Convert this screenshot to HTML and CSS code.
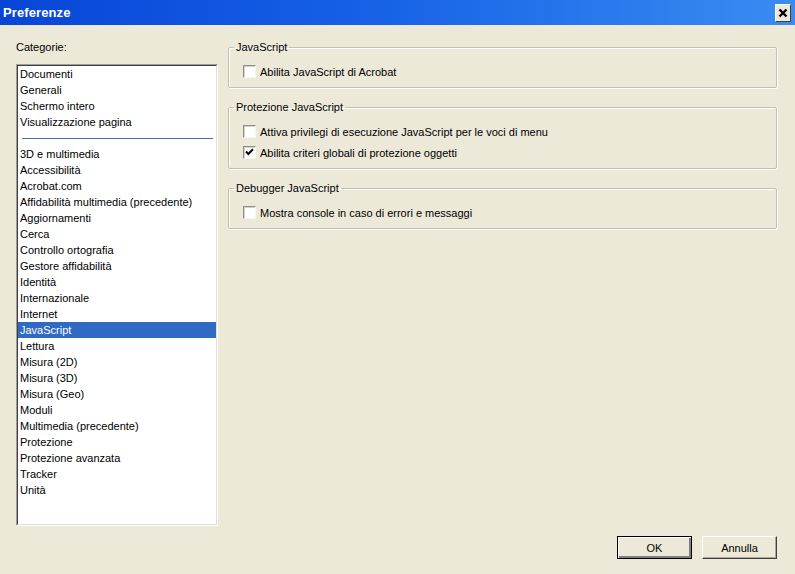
FILE: index.html
```html
<!DOCTYPE html>
<html lang="it">
<head>
<meta charset="utf-8">
<title>Preferenze</title>
<link rel="stylesheet" href="styles.css">
</head>
<body>
<div class="window">
  <div class="titlebar">
    <span class="title">Preferenze</span>
    <span class="close"><svg width="10" height="10" viewBox="0 0 10 10"><path d="M1.5 1.5 L8.5 8.5 M8.5 1.5 L1.5 8.5" stroke="#000" stroke-width="2.4" fill="none"/></svg></span>
  </div>
  <div class="main">
    <div class="left">
      <div class="label">Categorie:</div>
      <div class="listbox">
        <div class="listbox-inner">
          <div class="item">Documenti</div>
          <div class="item">Generali</div>
          <div class="item">Schermo intero</div>
          <div class="item">Visualizzazione pagina</div>
          <div class="sep"><span class="sep-line"></span></div>
          <div class="item">3D e multimedia</div>
          <div class="item">Accessibilità</div>
          <div class="item">Acrobat.com</div>
          <div class="item">Affidabilità multimedia (precedente)</div>
          <div class="item">Aggiornamenti</div>
          <div class="item">Cerca</div>
          <div class="item">Controllo ortografia</div>
          <div class="item">Gestore affidabilità</div>
          <div class="item">Identità</div>
          <div class="item">Internazionale</div>
          <div class="item">Internet</div>
          <div class="item selected">JavaScript</div>
          <div class="item">Lettura</div>
          <div class="item">Misura (2D)</div>
          <div class="item">Misura (3D)</div>
          <div class="item">Misura (Geo)</div>
          <div class="item">Moduli</div>
          <div class="item">Multimedia (precedente)</div>
          <div class="item">Protezione</div>
          <div class="item">Protezione avanzata</div>
          <div class="item">Tracker</div>
          <div class="item">Unità</div>
        </div>
      </div>
    </div>
    <div class="right">
      <fieldset class="group">
        <legend>JavaScript</legend>
        <div class="row"><span class="check"></span><span>Abilita JavaScript di Acrobat</span></div>
      </fieldset>
      <fieldset class="group">
        <legend>Protezione JavaScript</legend>
        <div class="row"><span class="check"></span><span>Attiva privilegi di esecuzione JavaScript per le voci di menu</span></div>
        <div class="row"><span class="check"><svg width="11" height="11" viewBox="0 0 11 11"><path d="M2 4.5 L4.3 7 L9 2.2" stroke="#000" stroke-width="2" fill="none"/></svg></span><span>Abilita criteri globali di protezione oggetti</span></div>
      </fieldset>
      <fieldset class="group">
        <legend>Debugger JavaScript</legend>
        <div class="row"><span class="check"></span><span>Mostra console in caso di errori e messaggi</span></div>
      </fieldset>
    </div>
  </div>
  <div class="footer">
    <button class="btn default">OK</button>
    <button class="btn">Annulla</button>
  </div>
</div>
</body>
</html>
```
FILE: styles.css
```css
html, body {
  margin: 0;
  padding: 0;
}
body {
  width: 795px;
  height: 574px;
  overflow: hidden;
  font-family: "Liberation Sans", Arial, sans-serif;
  font-size: 11px;
  color: #000;
}
.window {
  width: 795px;
  height: 574px;
  background: #ECE9D8;
  display: flex;
  flex-direction: column;
}
.titlebar {
  height: 25px;
  flex: none;
  background: linear-gradient(to right, #0845D6 0%, #1560E6 45%, #3A8CF2 100%);
  display: flex;
  align-items: center;
  justify-content: space-between;
  padding: 0 4px 0 3px;
}
.title {
  color: #fff;
  font-weight: bold;
  font-size: 13px;
  letter-spacing: 0.1px;
}
.close {
  width: 16px;
  height: 18px;
  box-sizing: border-box;
  background: #ECE9D8;
  border: 1px solid;
  border-color: #fff #404040 #404040 #fff;
  display: flex;
  align-items: center;
  justify-content: center;
  margin-top: 1px;
}
.main {
  display: flex;
  padding: 14px 0 0 16px;
  flex: none;
}
.left {
  width: 202px;
  display: flex;
  flex-direction: column;
}
.label {
  line-height: 16px;
  height: 16px;
  margin-bottom: 9px;
}
.listbox {
  height: 462px;
  box-sizing: border-box;
  border: 1px solid;
  border-color: #9d9d9d #fff #fff #9d9d9d;
}
.listbox-inner {
  height: 100%;
  box-sizing: border-box;
  border: 1px solid;
  border-color: #404040 #E2DFCF #E2DFCF #404040;
  background: #fff;
}
.item {
  height: 16px;
  line-height: 16px;
  padding-left: 2px;
  white-space: nowrap;
}
.item.selected {
  background: #316AC5;
  color: #fff;
}
.sep {
  height: 16px;
  display: flex;
  align-items: center;
  padding: 0 3px 0 4px;
}
.sep-line {
  flex: 1;
  height: 1px;
  background: #4A6AA0;
}
.right {
  margin-left: 10px;
  width: 549px;
  display: flex;
  flex-direction: column;
  gap: 11px;
}
.group {
  margin: 0;
  padding: 6px 0 5px 14px;
  border: 1px solid #C2C0B2;
  border-radius: 2px;
  box-shadow: inset 1px 1px #fff, 1px 1px #fff;
  min-width: 0;
}
.group legend {
  padding: 0 2px;
  margin-left: -9px;
  line-height: 16px;
  height: 16px;
}
.row {
  height: 21px;
  display: flex;
  align-items: center;
  gap: 4px;
  white-space: nowrap;
}
.check {
  width: 13px;
  height: 13px;
  box-sizing: border-box;
  border: 1px solid;
  border-color: #8E8E8E #F6F6F2 #F6F6F2 #8E8E8E;
  background: #fff;
  box-shadow: inset 1px 1px #D6D3C6;
  display: flex;
  align-items: center;
  justify-content: center;
  flex: none;
}
.footer {
  display: flex;
  justify-content: flex-end;
  gap: 10px;
  padding: 10px 18px 0 0;
}
.btn {
  width: 75px;
  height: 23px;
  box-sizing: border-box;
  font-family: "Liberation Sans", Arial, sans-serif;
  font-size: 11px;
  color: #000;
  background: #ECE9D8;
  border: 1px solid;
  border-color: #fff #404040 #404040 #fff;
  box-shadow: inset -1px -1px #ACA899;
  padding: 0;
  margin: 0;
}
.btn.default {
  border: 1px solid #000;
  box-shadow: inset 1px 1px #fff, inset -2px -2px #808080;
}
```
